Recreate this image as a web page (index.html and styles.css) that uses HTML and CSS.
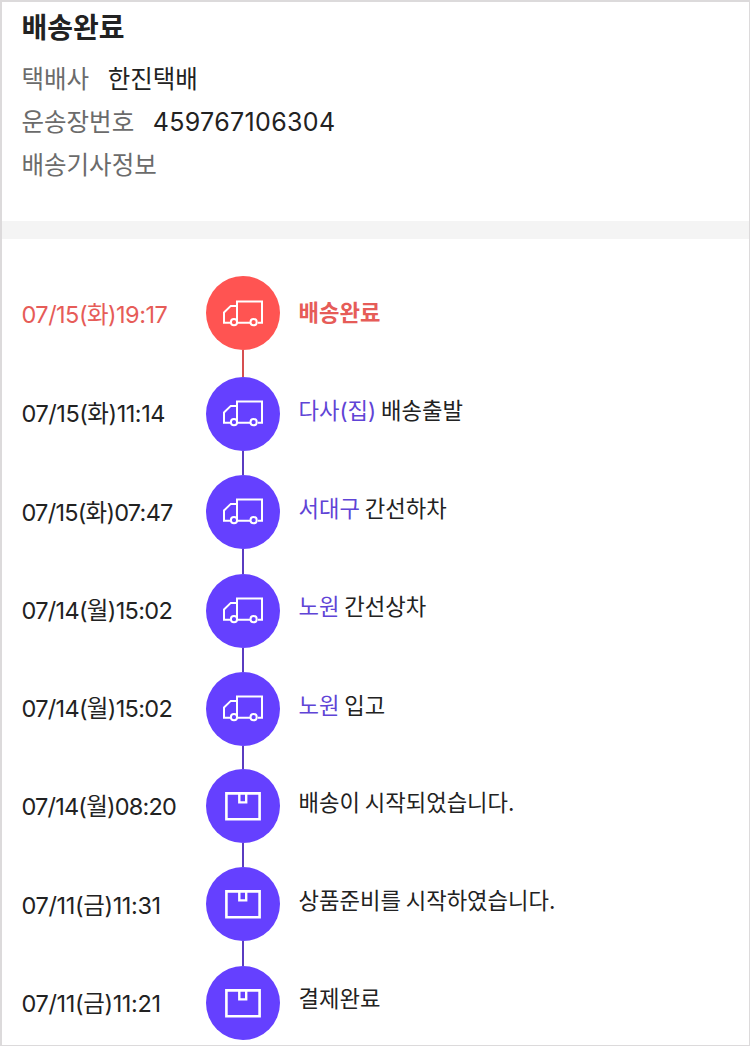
FILE: index.html
```html
<!DOCTYPE html>
<html lang="ko">
<head>
<meta charset="utf-8">
<title>배송조회</title>
<link rel="stylesheet" href="styles.css">
</head>
<body>
<svg class="defs" width="0" height="0" aria-hidden="true">
  <symbol id="truck" viewBox="0 0 42 28"><g fill="none" stroke="currentColor" stroke-width="2"><path d="M8.8 23.8H2V13.5L8.8 6.9H15M15 23.8V2.4H40V23.8H35.8M14.8 23.8H28.2"/><circle cx="12" cy="23.2" r="3.1"/><circle cx="31.6" cy="23.2" r="3.1"/></g></symbol>
  <symbol id="box" viewBox="0 0 36 29"><g fill="none" stroke="currentColor" stroke-width="2.6"><path d="M1.4 1.4H34.6V27.2H1.4Z"/><path d="M14.3 1.4V10.4H21.2V1.4" stroke-width="2.4"/></g></symbol>
</svg>
<main class="page">
  <section class="summary">
    <h1 class="title">배송완료</h1>
    <dl class="info">
      <div class="info-row"><dt>택배사</dt><dd>한진택배</dd></div>
      <div class="info-row"><dt>운송장번호</dt><dd class="number">459767106304</dd></div>
      <div class="info-row"><dt>배송기사정보</dt></div>
    </dl>
  </section>
  <ol class="timeline">
    <li class="step done"><time>07/15(화)19:17</time><div class="rail"><span class="node"><svg class="truck"><use href="#truck"/></svg></span></div><p>배송완료</p></li>
    <li class="step"><time>07/15(화)11:14</time><div class="rail"><span class="node"><svg class="truck"><use href="#truck"/></svg></span></div><p><b>다사(집)</b> 배송출발</p></li>
    <li class="step"><time>07/15(화)07:47</time><div class="rail"><span class="node"><svg class="truck"><use href="#truck"/></svg></span></div><p><b>서대구</b> 간선하차</p></li>
    <li class="step"><time>07/14(월)15:02</time><div class="rail"><span class="node"><svg class="truck"><use href="#truck"/></svg></span></div><p><b>노원</b> 간선상차</p></li>
    <li class="step"><time>07/14(월)15:02</time><div class="rail"><span class="node"><svg class="truck"><use href="#truck"/></svg></span></div><p><b>노원</b> 입고</p></li>
    <li class="step"><time>07/14(월)08:20</time><div class="rail"><span class="node"><svg class="box"><use href="#box"/></svg></span></div><p>배송이 시작되었습니다.</p></li>
    <li class="step"><time>07/11(금)11:31</time><div class="rail"><span class="node"><svg class="box"><use href="#box"/></svg></span></div><p>상품준비를 시작하였습니다.</p></li>
    <li class="step"><time>07/11(금)11:21</time><div class="rail"><span class="node"><svg class="box"><use href="#box"/></svg></span></div><p>결제완료</p></li>
  </ol>
</main>
</body>
</html>
```

FILE: styles.css
```css
* { box-sizing: border-box; margin: 0; padding: 0; }
body {
  background: #fff;
  color: #222;
  font-family: Inter, "Noto Sans CJK KR", sans-serif;
}
.defs { display: block; }
.page {
  width: 750px;
  height: 1046px;
  border: 2px solid #dcdadb;
  border-right-width: 1px;
  border-bottom-width: 1px;
  overflow: hidden;
}
.summary {
  height: 237px;
  padding: 6px 19.5px 0;
  border-bottom: 18px solid #f4f4f4;
}
.title { font-size: 28px; line-height: 40px; font-weight: 700; }
.info { padding-top: 10px; font-size: 24.5px; line-height: 43px; }
.info-row { display: flex; gap: 18.5px; height: 43px; }
.info-row:nth-child(2) { line-height: 42px; }
.info dt { color: #6b6b6b; }
.number { font-size: 25px; letter-spacing: 0.35px; }
.timeline { list-style: none; padding: 37px 20px 0; }
.step {
  display: grid;
  grid-template-columns: 184px 74px 1fr;
  height: 98px;
}
.step time {
  margin-left: -0.5px;
  font-size: 23.5px;
  line-height: 74px;
  letter-spacing: -0.68px;
  white-space: nowrap;
}
.step p {
  padding-left: 18.5px;
  font-size: 22.25px;
  line-height: 68px;
  word-spacing: -1.4px;
  white-space: nowrap;
}
.step b { color: #5f44d6; font-weight: 400; }
.rail { display: flex; flex-direction: column; align-items: center; color: #6540ff; }
.rail::after { content: ""; flex: 1; width: 1.4px; background: #5a3cc0; }
.node {
  display: flex;
  align-items: center;
  justify-content: center;
  flex: none;
  width: 74px;
  height: 74px;
  border-radius: 50%;
  background: #6540ff;
  color: #fff;
}
.truck { width: 42px; height: 28px; margin-bottom: 2px; }
.box { width: 36px; height: 29px; }
.step:nth-child(1) { height: 101px; }
.step:nth-child(3), .step:nth-child(7) { height: 99px; }
.step:nth-child(5) { height: 97px; }
.step:last-child { height: 74px; }
.step:last-child .rail::after { display: none; }
.step:nth-child(1) time { padding-top: 2px; letter-spacing: -0.52px; }
.step:nth-child(2) time { letter-spacing: -0.45px; }
.step:nth-child(3) time { padding-top: 1px; letter-spacing: -0.75px; }
.step:nth-child(6) time { padding-top: 1px; letter-spacing: -0.8px; }
.step:nth-child(n+7) time { padding-top: 1px; letter-spacing: -0.36px; }
.step:nth-child(7) time { padding-top: 2px; }
.step:nth-child(4) p, .step:nth-child(8) p { line-height: 66px; }
.done { color: #e65c58; }
.done p { line-height: 74px; font-weight: 700; }
.done .node { background: #ff5452; }
.done .truck { margin-bottom: 0; }
.done .rail::after { background: #d64f50; }
```
